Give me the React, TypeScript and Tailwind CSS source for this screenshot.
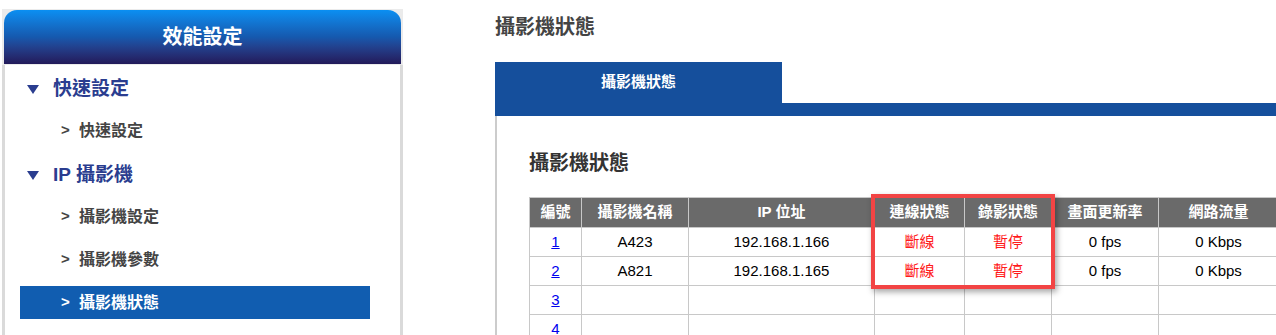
import React from "react";

const font = { fontFamily: '"Liberation Sans", "Noto Sans CJK TC", sans-serif' };

function SubItem({ label, active }: { label: string; active?: boolean }) {
  if (active) {
    return (
      <div className="h-[43px] shrink-0 flex items-center">
        <div className="ml-[15px] w-[350px] h-[33px] bg-[#115db0] flex items-center text-white font-bold text-[16px]">
          <span className="ml-[41px] w-[18px] text-[15px]">&gt;</span>
          <span>{label}</span>
        </div>
      </div>
    );
  }
  return (
    <div className="h-[43px] shrink-0 flex items-center text-[#444] font-bold text-[16px]">
      <span className="ml-[56px] w-[18px] text-[15px]">&gt;</span>
      <span>{label}</span>
    </div>
  );
}

function Heading({ label }: { label: string }) {
  return (
    <div className="h-[43px] shrink-0 flex items-center pt-[4px] text-[#2a3d8f] font-bold text-[19px]">
      <svg className="ml-[22px]" width="12" height="10" viewBox="0 0 12 10">
        <polygon points="0,0 12,0 6,9" fill="#2a3d8f" />
      </svg>
      <span className="ml-[14px]">{label}</span>
    </div>
  );
}

const cols = [52, 107, 186, 90, 87, 107, 120];
const headers = ["編號", "攝影機名稱", "IP 位址", "連線狀態", "錄影狀態", "畫面更新率", "網路流量"];
const rows = [
  ["1", "A423", "192.168.1.166", "斷線", "暫停", "0 fps", "0 Kbps"],
  ["2", "A821", "192.168.1.165", "斷線", "暫停", "0 fps", "0 Kbps"],
  ["3", "", "", "", "", "", ""],
  ["4", "", "", "", "", "", ""],
];

export default function App() {
  return (
    <div className="w-[1276px] h-[335px] overflow-hidden bg-white flex" style={font}>
      {/* Left panel */}
      <div className="ml-[2px] mt-[9px] w-[401px] flex flex-col shrink-0">
        <div className="shrink-0 bg-[#ebebeb] pt-[1px] px-[2px] pb-[1px]">
          <div className="h-[54px] rounded-t-[13px] bg-gradient-to-b from-[#0a8ff2] via-[#1559ae] to-[#221a5a] flex items-center justify-center text-white font-bold text-[20px]">
            效能設定
          </div>
        </div>
        <div className="flex-1 bg-white border-x-[3px] border-[#dadada] pt-[1px] flex flex-col">
          <Heading label="快速設定" />
          <SubItem label="快速設定" />
          <Heading label="IP 攝影機" />
          <SubItem label="攝影機設定" />
          <SubItem label="攝影機參數" />
          <SubItem label="攝影機狀態" active />
        </div>
      </div>

      {/* Right */}
      <div className="ml-[92px] flex-1 flex flex-col overflow-hidden">
        <div className="shrink-0 mt-[13px] h-[28px] leading-[28px] text-[20px] font-bold text-[#444]">攝影機狀態</div>
        <div className="shrink-0 mt-[21px] flex items-end">
          <div className="w-[287px] h-[41px] bg-[#154f9c] flex items-center justify-center text-white font-bold text-[15px]">
            攝影機狀態
          </div>
        </div>
        <div className="shrink-0 h-[13px] bg-[#154f9c]" />
        <div className="flex-1 shrink-0 border-l-2 border-[#cccccc] pl-[32px]">
          <div className="mt-[33px] h-[28px] leading-[28px] text-[20px] font-bold text-[#333]">攝影機狀態</div>
          <div className="relative mt-[20px] w-[750px]">
            <table className="border-collapse table-fixed text-[15px]" style={{ width: cols.reduce((a, b) => a + b, 0) }}>
              <colgroup>
                {cols.map((w, i) => (
                  <col key={i} style={{ width: w }} />
                ))}
              </colgroup>
              <thead>
                <tr>
                  {headers.map((h) => (
                    <th key={h} className="h-[30px] p-0 bg-[#6a6a6a] text-white font-bold border border-[#c8c8c8] text-center">
                      {h}
                    </th>
                  ))}
                </tr>
              </thead>
              <tbody>
                {rows.map((r, ri) => (
                  <tr key={ri}>
                    {r.map((c, ci) => (
                      <td
                        key={ci}
                        className={
                          "h-[29px] p-0 text-center border border-[#c8c8c8] " +
                          (ci === 3 || ci === 4 ? "text-[#ff1a1a]" : "text-black")
                        }
                      >
                        {ci === 0 ? <a className="text-[#0000ee] underline" href="#">{c}</a> : c}
                      </td>
                    ))}
                  </tr>
                ))}
              </tbody>
            </table>
            <div className="absolute left-[342px] top-[-3px] w-[184px] h-[95px] border-4 border-[#f24444] shadow-[2px_3px_6px_rgba(0,0,0,0.35)] pointer-events-none" />
          </div>
        </div>
      </div>
    </div>
  );
}
